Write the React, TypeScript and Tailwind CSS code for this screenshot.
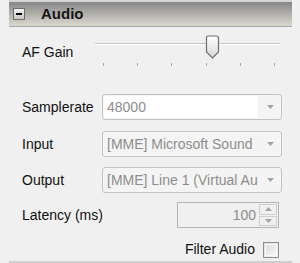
const font = { fontFamily: '"Liberation Sans", Arial, sans-serif' };

function Arrow({ up = false, className = "" }: { up?: boolean; className?: string }) {
  return (
    <svg width="7" height="4" viewBox="0 0 7 4" className={className}>
      <path d={up ? "M0 4 L3.5 0 L7 4 Z" : "M0 0 L7 0 L3.5 4 Z"} fill="#a3a3a3" />
    </svg>
  );
}

function Combo({ value, white = false }: { value: string; white?: boolean }) {
  return (
    <div className="w-[180px] h-[26px] flex items-stretch rounded-[3px] border border-[#c2c2c2] bg-[#f4f4f4] overflow-hidden">
      <div
        className={`flex-1 min-w-0 flex items-center pl-[3px] m-[1px] overflow-hidden whitespace-nowrap text-[14px] text-[#8d8d8d] ${
          white ? "bg-white" : ""
        }`}
      >
        {value}
      </div>
      <div className="w-[22px] flex items-center justify-center">
        <Arrow />
      </div>
    </div>
  );
}

export default function App() {
  return (
    <div style={font} className="w-[300px] h-[263px] bg-[#f0f0f0] pl-[9px] pr-[8px] flex flex-col text-[#111]">
      {/* header */}
      <div className="h-[27px] flex items-center border-t-2 border-[#d4d4d4] border-b border-b-[#a8a8a8] bg-gradient-to-b from-[#878787] to-[#dcd9cf] pl-[4px]">
        <div className="w-[12px] h-[12px] border border-[#6e6e6e] bg-gradient-to-b from-[#f2f2f2] to-[#c6c6c6] flex items-center justify-center">
          <div className="w-[6px] h-[2px] bg-black" />
        </div>
        <span className="ml-[16px] text-[15px] font-bold text-[#151515]">Audio</span>
      </div>

      <div className="flex-1 flex flex-col pl-[13px] pr-[10px]">
        {/* AF Gain */}
        <div className="mt-[8px] h-[32px] flex items-start">
          <span className="w-[73px] mt-[9px] text-[14px] leading-[16px]">AF Gain</span>
          <div className="relative flex-1 mr-[2px] h-[32px]">
            <div className="mt-[8px] h-[1px] bg-[#c4c4c4]" />
            <div className="h-[1px] bg-white" />
            <div className="mt-[18px] ml-[8px] mr-[5px] flex justify-between">
              {[0, 1, 2, 3, 4, 5].map((i) => (
                <div key={i} className="w-[1px] h-[3px] bg-[#a9a9a9]" />
              ))}
            </div>
            <svg width="15" height="24" viewBox="0 0 15 24" className="absolute left-[110px] top-0">
              <defs>
                <linearGradient id="th" x1="0" y1="0" x2="0" y2="1">
                  <stop offset="0" stopColor="#ffffff" />
                  <stop offset="1" stopColor="#d6d6d6" />
                </linearGradient>
              </defs>
              <path
                d="M1.5 3 Q1.5 1 3.5 1 H11.5 Q13.5 1 13.5 3 V17 L7.5 23 L1.5 17 Z"
                fill="url(#th)"
                stroke="#6f6f6f"
                strokeWidth="1.2"
              />
            </svg>
          </div>
        </div>

        {/* combos */}
        <div className="mt-[27px] flex items-center">
          <span className="w-[80px] text-[14px]">Samplerate</span>
          <Combo value="48000" white />
        </div>
        <div className="mt-[11px] flex items-center">
          <span className="w-[80px] text-[14px]">Input</span>
          <Combo value="[MME] Microsoft Sound" />
        </div>
        <div className="mt-[10px] flex items-center">
          <span className="w-[80px] text-[14px]">Output</span>
          <Combo value="[MME] Line 1 (Virtual Audio Cable)" />
        </div>

        {/* latency */}
        <div className="mt-[9px] flex items-center">
          <span className="text-[14px]">Latency (ms)</span>
          <div className="ml-auto mr-[3px] w-[102px] h-[26px] flex border border-[#b4b4b4] bg-[#f0f0f0]">
            <div className="flex-1 flex items-center justify-end pr-[2px] text-[14px] text-[#8d8d8d]">100</div>
            <div className="w-[20px] flex flex-col p-[1px] gap-[1px]">
              <div className="flex-1 border border-[#cfcfcf] flex items-center justify-center">
                <Arrow up />
              </div>
              <div className="flex-1 border border-[#cfcfcf] flex items-center justify-center">
                <Arrow />
              </div>
            </div>
          </div>
        </div>

        {/* filter audio */}
        <div className="mt-[11px] flex items-center justify-end mr-[3px]">
          <span className="text-[14px]">Filter Audio</span>
          <div className="ml-[8px] w-[16px] h-[16px] border border-[#8e8e8e] bg-gradient-to-br from-[#dcdcdc] to-[#f6f6f6] p-[1px]">
            <div className="w-full h-full border border-[#f8f8f8]" />
          </div>
        </div>
      </div>

      <div className="h-[2px] bg-[#cfcfcf]" />
    </div>
  );
}
